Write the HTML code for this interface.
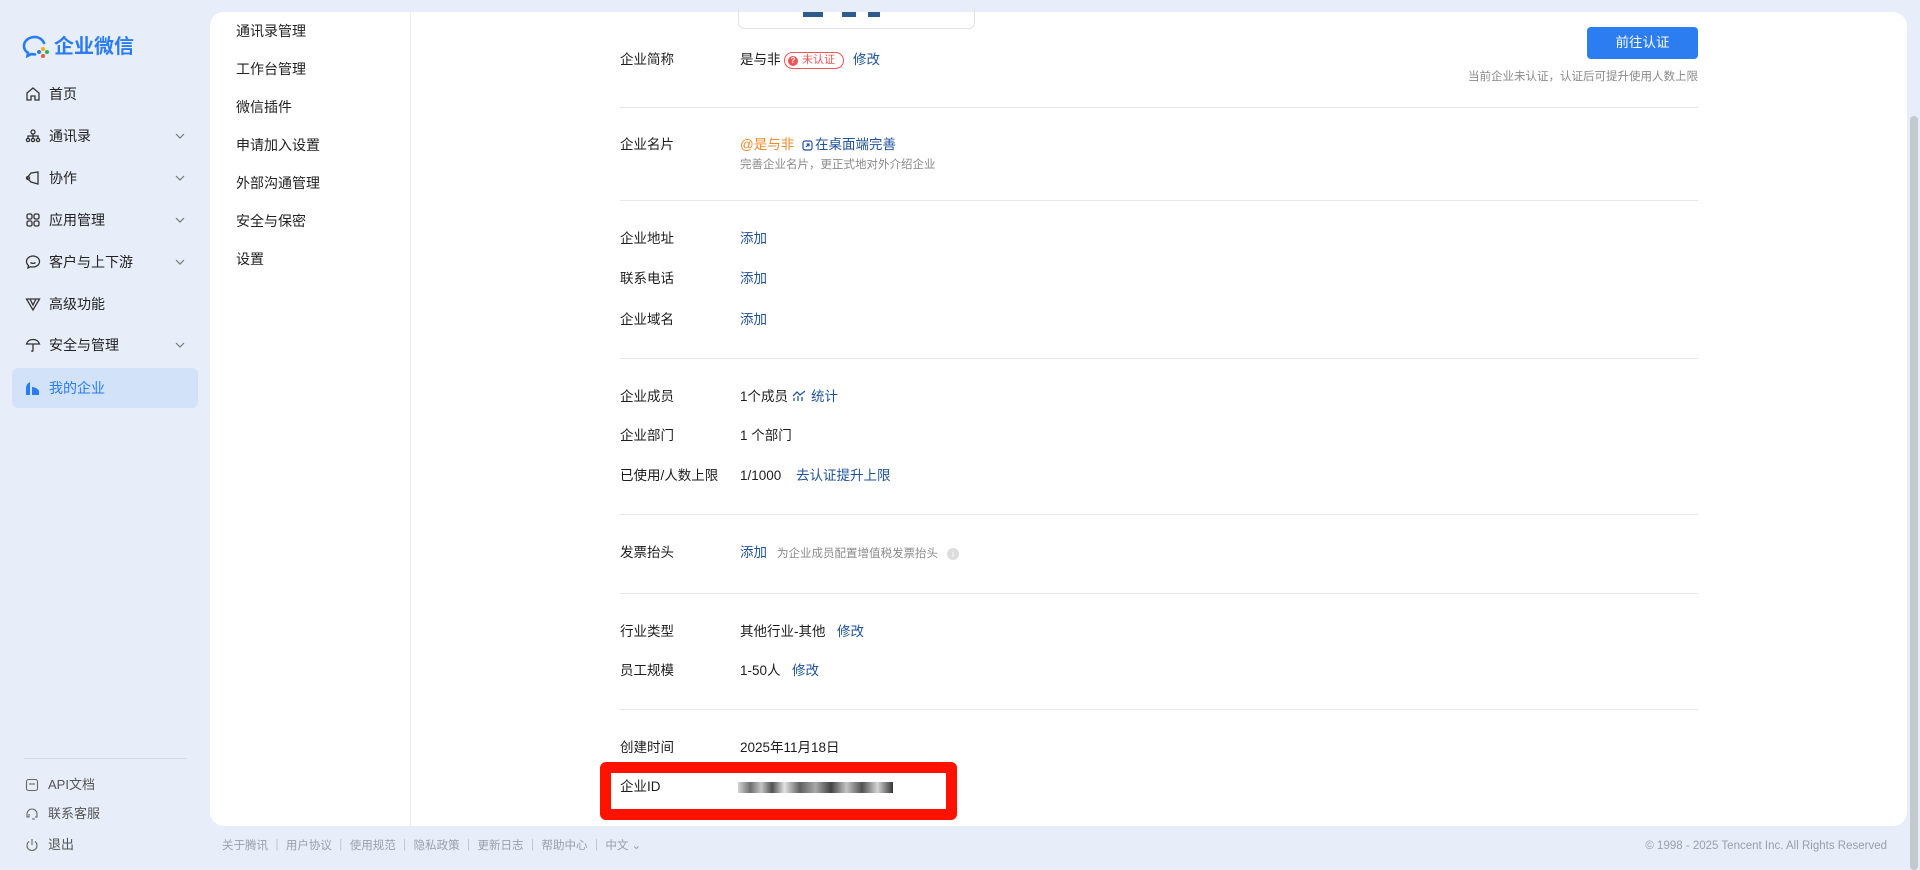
<!DOCTYPE html>
<html><head><meta charset="utf-8"><style>
*{box-sizing:border-box;margin:0;padding:0}
body{width:1920px;height:870px;overflow:hidden;background:#e7eef9;font-family:"Liberation Sans","Noto Sans CJK SC",sans-serif;color:#1d1d1f;position:relative}
.a{position:absolute;white-space:nowrap;line-height:20px}
.side{font-size:14px;color:#222}
.side svg{position:absolute}
.chev{position:absolute;left:174px;width:12px;height:12px}
.panel{position:absolute;left:210px;top:12px;width:1697px;height:814px;background:#fff;border-radius:14px}
.sub{position:absolute;left:410px;top:12px;width:1px;height:814px;background:#ececec}
.m{font-size:13.5px}
.lnk{color:#215399}
.hr{position:absolute;left:620px;width:1078px;height:1px;background:#e8e8e8}
.g{color:#8a8a8a;font-size:11.5px}
.ft{font-size:11.5px;color:#9aa0aa}
</style></head><body>
<svg class="a" style="left:22px;top:34px" width="30" height="26" viewBox="0 0 30 26"><path d="M13 3C6.5 3 2 7 2 12c0 3 1.5 5.3 4 6.8L5.5 22l4-2c1.2.3 2.3.4 3.5.4" fill="none" stroke="#2a7cf4" stroke-width="2.6" stroke-linecap="round"/><path d="M22 9c-1.5-3.5-5-6-9-6" fill="none" stroke="#2a7cf4" stroke-width="2.6" stroke-linecap="round"/><circle cx="21" cy="15" r="2" fill="#f8b300"/><circle cx="25" cy="18" r="2" fill="#1fb55b"/><circle cx="17" cy="18" r="2" fill="#2a7cf4"/><circle cx="21" cy="22" r="2" fill="#ee5a36"/></svg>
<div class="a" style="left:54px;top:34px;font-size:20px;font-weight:bold;color:#2a7cf4;line-height:26px">企业微信</div>
<div class="side">
<svg style="left:25px;top:86px" width="16" height="16" viewBox="0 0 16 16" fill="none" stroke="#333" stroke-width="1.3"><path d="M2 7L8 2l6 5v7H10V10H6v4H2z"/></svg><div class="a" style="left:49px;top:84px">首页</div>
<svg style="left:25px;top:128px" width="16" height="16" viewBox="0 0 16 16" fill="none" stroke="#333" stroke-width="1.3"><circle cx="8" cy="4" r="2"/><circle cx="3" cy="12" r="1.6"/><circle cx="8" cy="12" r="1.6"/><circle cx="13" cy="12" r="1.6"/><path d="M3 10V8h10v2M8 6v4"/></svg><div class="a" style="left:49px;top:126px">通讯录</div>
<svg class="chev" style="top:130px" viewBox="0 0 12 12"><path d="M2 4l4 4 4-4" fill="none" stroke="#777" stroke-width="1.2"/></svg>
<svg style="left:25px;top:170px" width="16" height="16" viewBox="0 0 16 16" fill="none" stroke="#333" stroke-width="1.3"><path d="M6 3l7-1v12l-7-2-4-4z"/><circle cx="3" cy="8" r="1.5"/></svg><div class="a" style="left:49px;top:168px">协作</div>
<svg class="chev" style="top:172px" viewBox="0 0 12 12"><path d="M2 4l4 4 4-4" fill="none" stroke="#777" stroke-width="1.2"/></svg>
<svg style="left:25px;top:212px" width="16" height="16" viewBox="0 0 16 16" fill="none" stroke="#333" stroke-width="1.3"><rect x="2" y="2" width="5" height="5" rx="1.5"/><rect x="9" y="2" width="5" height="5" rx="1.5"/><rect x="2" y="9" width="5" height="5" rx="1.5"/><rect x="9" y="9" width="5" height="5" rx="1.5"/></svg><div class="a" style="left:49px;top:210px">应用管理</div>
<svg class="chev" style="top:214px" viewBox="0 0 12 12"><path d="M2 4l4 4 4-4" fill="none" stroke="#777" stroke-width="1.2"/></svg>
<svg style="left:25px;top:254px" width="16" height="16" viewBox="0 0 16 16" fill="none" stroke="#333" stroke-width="1.3"><path d="M8 2c3.6 0 6.5 2.5 6.5 5.5S11.6 13 8 13c-.8 0-1.6-.1-2.3-.3L3 14l.5-2.5C2.3 10.5 1.5 9 1.5 7.5 1.5 4.5 4.4 2 8 2z"/><path d="M5.5 8.5c1.2 1.2 3.8 1.2 5 0"/></svg><div class="a" style="left:49px;top:252px">客户与上下游</div>
<svg class="chev" style="top:256px" viewBox="0 0 12 12"><path d="M2 4l4 4 4-4" fill="none" stroke="#777" stroke-width="1.2"/></svg>
<svg style="left:25px;top:296px" width="16" height="16" viewBox="0 0 16 16" fill="none" stroke="#333" stroke-width="1.3"><path d="M1.5 3h13L8 14zM5 3l3 6 3-6"/></svg><div class="a" style="left:49px;top:294px">高级功能</div>
<svg style="left:25px;top:337px" width="16" height="16" viewBox="0 0 16 16" fill="none" stroke="#333" stroke-width="1.3"><path d="M1.5 7C2.5 4 5 2.5 8 2.5S13.5 4 14.5 7zM8 7v6.5c0 1-1.5 1-1.5 0"/></svg><div class="a" style="left:49px;top:335px">安全与管理</div>
<svg class="chev" style="top:339px" viewBox="0 0 12 12"><path d="M2 4l4 4 4-4" fill="none" stroke="#777" stroke-width="1.2"/></svg>
<div class="a" style="left:12px;top:368px;width:186px;height:40px;background:#d2e2f8;border-radius:6px"></div>
<svg style="left:25px;top:380px" width="16" height="16" viewBox="0 0 16 16" fill="#2a7cf4"><path d="M1 15V8c0-3 2-5 4-6v13zM7 15V7c2.5 0 6 1.5 7 4v4z"/></svg><div class="a" style="left:49px;top:378px;color:#2a7cf4">我的企业</div>
<div class="a" style="left:24px;top:758px;width:162px;height:1px;background:#d3d9e3"></div>
<svg style="left:25px;top:778px" width="14" height="14" viewBox="0 0 14 14" fill="none" stroke="#666" stroke-width="1.1"><rect x="1.5" y="1.5" width="11" height="11" rx="2"/><path d="M4 6h6"/></svg><div class="a" style="left:48px;top:775px;font-size:13px;color:#555">API文档</div>
<svg style="left:25px;top:807px" width="14" height="14" viewBox="0 0 14 14" fill="none" stroke="#666" stroke-width="1.1"><path d="M2 8V7a5 5 0 0110 0v1M2 8v2h2V7M12 8v2h-2M10 12H7"/></svg><div class="a" style="left:48px;top:804px;font-size:13px;color:#555">联系客服</div>
<svg style="left:25px;top:838px" width="14" height="14" viewBox="0 0 14 14" fill="none" stroke="#666" stroke-width="1.1"><path d="M4 3.5a5 5 0 106 0M7 1v6"/></svg><div class="a" style="left:48px;top:835px;font-size:13px;color:#555">退出</div>
</div>
<div class="panel"></div>
<div class="sub"></div>
<div class="side">
<div class="a" style="left:236px;top:21px">通讯录管理</div>
<div class="a" style="left:236px;top:59px">工作台管理</div>
<div class="a" style="left:236px;top:97px">微信插件</div>
<div class="a" style="left:236px;top:135px">申请加入设置</div>
<div class="a" style="left:236px;top:173px">外部沟通管理</div>
<div class="a" style="left:236px;top:211px">安全与保密</div>
<div class="a" style="left:236px;top:249px">设置</div>
</div>
<div class="a" style="left:738px;top:8px;width:237px;height:21px;border:1px solid #e2e2e2;border-top:none;border-radius:0 0 6px 6px"></div>
<div class="a" style="left:803px;top:12px;width:20px;height:5px;background:#2f5a8e"></div>
<div class="a" style="left:842px;top:12px;width:14px;height:5px;background:#2f5a8e"></div>
<div class="a" style="left:868px;top:12px;width:12px;height:5px;background:#2f5a8e"></div>
<div class="a" style="left:1587px;top:27px;width:111px;height:32px;background:#2c7ef0;border-radius:4px;color:#fff;font-size:13.5px;text-align:center;line-height:32px">前往认证</div>
<div class="a g" style="right:222px;top:67px">当前企业未认证，认证后可提升使用人数上限</div>
<div class="m">
<div class="a" style="left:620px;top:50px">企业简称</div>
<div class="a" style="left:740px;top:50px">是与非</div>
<div class="a" style="left:784px;top:52px;width:60px;height:17px;border:1px solid #e55;border-radius:9px;font-size:11px;color:#e55;line-height:15px;padding-left:17px">未认证</div>
<div class="a" style="left:788px;top:56px;width:10px;height:10px;border-radius:50%;background:#e55;color:#fff;font-size:8px;text-align:center;line-height:10px;font-weight:bold">?</div>
<div class="a lnk" style="left:853px;top:50px">修改</div>
<div class="hr" style="top:107px"></div>
<div class="a" style="left:620px;top:135px">企业名片</div>
<div class="a" style="left:740px;top:135px;color:#f08a2c">@是与非</div>
<svg class="a" style="left:802px;top:140px" width="11" height="11" viewBox="0 0 11 11" fill="none" stroke="#215399" stroke-width="1.2"><rect x="1" y="1" width="9" height="9" rx="2"/><path d="M4 7l3-3M4.5 4H7v2.5"/></svg>
<div class="a lnk" style="left:815px;top:135px">在桌面端完善</div>
<div class="a g" style="left:740px;top:155px">完善企业名片，更正式地对外介绍企业</div>
<div class="hr" style="top:200px"></div>
<div class="a" style="left:620px;top:229px">企业地址</div><div class="a lnk" style="left:740px;top:229px">添加</div>
<div class="a" style="left:620px;top:269px">联系电话</div><div class="a lnk" style="left:740px;top:269px">添加</div>
<div class="a" style="left:620px;top:310px">企业域名</div><div class="a lnk" style="left:740px;top:310px">添加</div>
<div class="hr" style="top:358px"></div>
<div class="a" style="left:620px;top:387px">企业成员</div><div class="a" style="left:740px;top:387px">1个成员</div>
<svg class="a" style="left:792px;top:390px" width="14" height="12" viewBox="0 0 14 12" fill="none" stroke="#215399" stroke-width="1.3"><path d="M1 6l4-4 3 3 5-4M2 11V8M6 11V6M10 11V7"/></svg>
<div class="a lnk" style="left:811px;top:387px">统计</div>
<div class="a" style="left:620px;top:426px">企业部门</div><div class="a" style="left:740px;top:426px">1 个部门</div>
<div class="a" style="left:620px;top:466px">已使用/人数上限</div><div class="a" style="left:740px;top:466px">1/1000</div><div class="a lnk" style="left:796px;top:466px">去认证提升上限</div>
<div class="hr" style="top:514px"></div>
<div class="a" style="left:620px;top:543px">发票抬头</div><div class="a lnk" style="left:740px;top:543px">添加</div>
<div class="a g" style="left:777px;top:544px">为企业成员配置增值税发票抬头</div>
<div class="a" style="left:947px;top:548px;width:12px;height:12px;border-radius:50%;background:#ddd;color:#fff;font-size:9px;text-align:center;line-height:12px">i</div>
<div class="hr" style="top:593px"></div>
<div class="a" style="left:620px;top:622px">行业类型</div><div class="a" style="left:740px;top:622px">其他行业-其他</div><div class="a lnk" style="left:837px;top:622px">修改</div>
<div class="a" style="left:620px;top:661px">员工规模</div><div class="a" style="left:740px;top:661px">1-50人</div><div class="a lnk" style="left:792px;top:661px">修改</div>
<div class="hr" style="top:709px"></div>
<div class="a" style="left:620px;top:738px">创建时间</div><div class="a" style="left:740px;top:738px">2025年11月18日</div>
<div class="a" style="left:600px;top:762px;width:357px;height:58px;border:11px solid #ff1200;border-radius:6px;background:#fff"></div>
<div class="a" style="left:620px;top:777px">企业ID</div>
<div class="a" style="left:738px;top:782px;width:155px;height:11px;background:linear-gradient(90deg,#ccc 0,#555 8%,#bbb 15%,#333 22%,#ddd 30%,#444 40%,#999 50%,#222 60%,#bbb 70%,#333 80%,#ccc 90%,#111 100%);opacity:.85"></div>
</div>
<div class="a ft" style="left:222px;top:836px">关于腾讯 ｜ 用户协议 ｜ 使用规范 ｜ 隐私政策 ｜ 更新日志 ｜ 帮助中心 ｜ 中文 ⌄</div>
<div class="a ft" style="right:33px;top:836px">© 1998 - 2025 Tencent Inc. All Rights Reserved</div>
<div class="a" style="left:1910px;top:116px;width:8px;height:754px;background:#c4c8cf;border-radius:4px"></div>
</body></html>
